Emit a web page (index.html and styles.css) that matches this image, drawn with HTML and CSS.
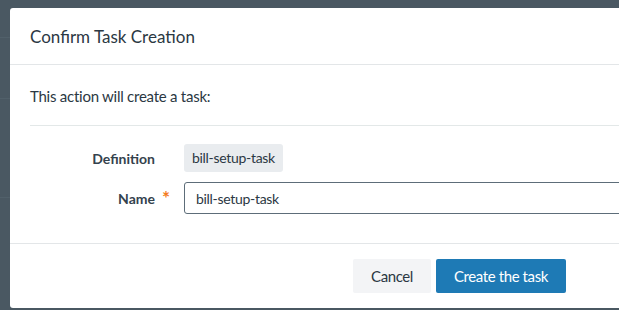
FILE: index.html
```html
<!DOCTYPE html>
<html lang="en">
<head>
  <meta charset="UTF-8">
  <title>Confirm Task Creation</title>
  <link rel="stylesheet" href="styles.css">
</head>

<body>

  <div class="backdrop">
    <div class="modal">
      <div class="modal-header">Confirm Task Creation</div>

      <div class="modal-body">
        <p class="intro">This action will create a task:</p>

        <div class="fields">
          <div class="field-label">Definition</div>
          <div class="field-value">
            <span class="tag">bill-setup-task</span>
          </div>

          <label class="field-label" for="taskName">Name<span class="req">*</span></label>
          <div class="field-value">
            <input type="text" id="taskName" value="bill-setup-task">
          </div>
        </div>
      </div>

      <div class="modal-footer">
        <button type="button" class="btn btn-cancel">Cancel</button>
        <button type="button" class="btn btn-primary">Create the task</button>
      </div>
    </div>
  </div>

</body>
</html>
```

FILE: styles.css
```css
body {
  font-family: Lato, 'Open Sans', sans-serif;
  background-color: #4a5862;
  background-image:
    linear-gradient(#51606a, #51606a),
    linear-gradient(#51606a, #51606a),
    linear-gradient(#51606a, #51606a);
  background-size: 100% 1px;
  background-position: 0 37px, 0 98px, 0 197px;
  background-repeat: no-repeat;
  margin: 0;
  padding: 0;
  height: 310px;
  overflow: hidden;
  color: #2b3843;
}

.backdrop {
  padding: 8px 0 0 10px;
}

.modal {
  width: 899px;
  height: 300px;
  background: #fff;
  border-radius: 3px;
  display: flex;
  flex-direction: column;
}

.modal-header {
  height: 56px;
  padding: 0 20px;
  display: flex;
  align-items: center;
  font-size: 17px;
  color: #2b3843;
  border-bottom: 1px solid #e3e6e8;
}

.modal-body {
  flex: 1;
  padding: 20px 20px 0;
}

.intro {
  margin: 0 0 18px;
  font-size: 15px;
  letter-spacing: -0.25px;
  line-height: 22px;
}

.fields {
  border-top: 1px solid #e3e8e8;
  padding-top: 18px;
  display: grid;
  grid-template-columns: 125px 1fr;
  column-gap: 29px;
  row-gap: 10px;
  align-items: center;
}

.field-label {
  text-align: right;
  font-weight: bold;
  font-size: 14px;
  color: #34424d;
}

.req {
  position: absolute;
  margin: -4px 0 0 7px;
  color: #f47b20;
  font-size: 19px;
  font-weight: bold;
}

.tag {
  display: inline-block;
  background: #e9ecef;
  border-radius: 3px;
  padding: 0 8px;
  height: 28px;
  line-height: 28px;
  font-size: 14px;
  letter-spacing: -0.3px;
}

input {
  width: 100%;
  box-sizing: border-box;
  height: 32px;
  padding: 0 11px;
  border: 1px solid #5d6d79;
  border-radius: 3px;
  font-family: inherit;
  font-size: 14px;
  letter-spacing: -0.3px;
  color: #2b3843;
}

.modal-footer {
  border-top: 1px solid #e3e6e8;
  padding: 15px 0;
  display: flex;
  justify-content: center;
  gap: 5px;
}

.btn {
  height: 34px;
  border: none;
  border-radius: 2px;
  font-family: inherit;
  font-size: 15px;
  letter-spacing: -0.4px;
  padding: 0 18px;
  cursor: pointer;
}

.btn-cancel {
  background: #f3f4f6;
  color: #2b3843;
}

.btn-primary {
  background: #1e7ab5;
  color: #fff;
}
```
